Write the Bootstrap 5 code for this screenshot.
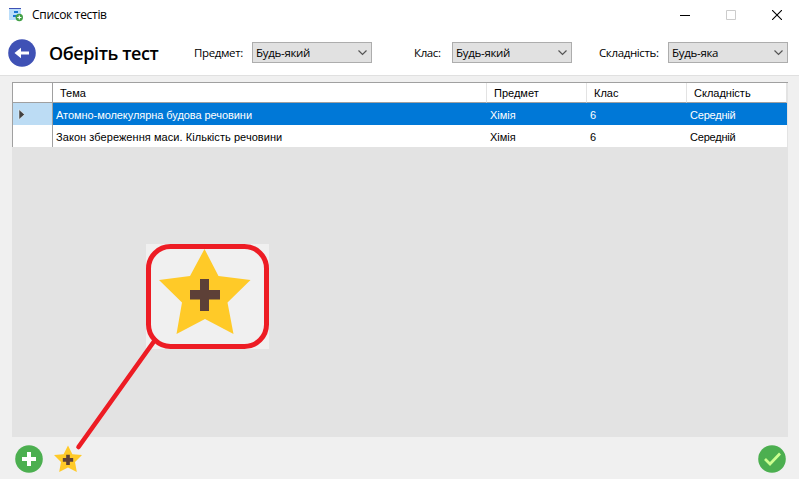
<!DOCTYPE html>
<html lang="uk">
<head>
<meta charset="utf-8">
<meta name="viewport" content="width=device-width, initial-scale=1">
<title>Список тестів</title>
<link href="https://cdn.jsdelivr.net/npm/bootstrap@5.3.0/dist/css/bootstrap.min.css" rel="stylesheet">
<style>
body{width:799px;height:479px;overflow:hidden;background:#f0f0f0;color:#000;font:12px/16px "Open Sans","Noto Sans",sans-serif}
svg{display:block;flex:none}
.titlebar{height:30px;padding-left:9px}
.win-title{font-size:12px;letter-spacing:-.3px;margin-left:9px}
.win-btns{margin-right:-1px}
.win-btn{width:46px;height:29px;border:0;background:none;padding:0;display:flex;align-items:center;justify-content:center}
.toolbar{height:46px;border-bottom:1px solid #e0e0e0;padding:0 11px 0 8px}
.page-title{font-size:18px;line-height:28px;font-weight:600;letter-spacing:-.4px;margin:0 0 0 13px;width:145px;white-space:nowrap}
.filter-label{font-size:11.5px;letter-spacing:-.37px;white-space:nowrap}
.combo{width:120px;height:21px;border:1px solid #adadad;background:#e1e1e1;font-size:11.5px;letter-spacing:-.3px;padding:1px 4px 0 3px;color:#000}
.grid-view{margin:6px 11px 0 12px;height:355px;background:#e3e3e3;border-top:1px solid #a0a0a0}
.tests{width:775px;table-layout:fixed;border-collapse:separate;border-spacing:0;font:11px/14px "Liberation Sans",Arial,sans-serif;background:#fff}
.tests th,.tests td{padding:0 0 0 3px;font-weight:400;white-space:nowrap}
.tests thead th{height:20px;padding-left:7px;border-bottom:1px solid #a0a0a0;border-right:1px solid #e3e3e3}
.tests tbody td,.tests tbody th{height:22px;padding-top:1px}
.tests tr>:first-child{border-right:1px solid #a0a0a0!important;border-left:1px solid #a0a0a0;padding-left:5px}
.tests .current>*{background:#0078d7;color:#fff}
.tests .current>:first-child{background:#bcdcf4;background-clip:padding-box}
.tests .current td:nth-child(2){letter-spacing:-.06px}
.tests tr:last-child td:nth-child(2){letter-spacing:.06px}
.tests .current td:nth-child(5),.tests tr td:nth-child(5){letter-spacing:-.2px}
.bottom{height:42px;padding:2px 13px 0 15px}
.callout-mark{position:absolute;left:0;top:0;pointer-events:none}
</style>
</head>
<body>
<header class="bg-white">
  <div class="titlebar d-flex align-items-center">
    <svg width="14" height="14" viewBox="0 0 14 14"><path fill="#bbdefb" d="M0 0h12v12H0z"/><path fill="#3f51b5" d="M0 0h12v1H0z"/><path fill="#1976d2" d="M5 3h4v2H5zM4 7h5v2H4z"/><circle cx="10.300" cy="9.500" r="3.700" fill="#43a047"/><path stroke="#fff" stroke-width="1.200" d="M8.200 9.500h4.200M10.300 7.400v4.200"/></svg>
    <span class="win-title">Список тестів</span>
    <div class="win-btns d-flex ms-auto">
      <button class="win-btn" aria-label="Згорнути"><svg width="10" height="10"><path fill="#000" d="M0 5h10v1H0z"/></svg></button>
      <button class="win-btn" aria-label="Розгорнути" disabled><svg width="10" height="10"><path fill="none" stroke="#ccc" d="M.5.5h9v9h-9z"/></svg></button>
      <button class="win-btn" aria-label="Закрити"><svg width="10" height="10"><path stroke="#000" stroke-width="1.100" d="M0 0l10 10M10 0L0 10"/></svg></button>
    </div>
  </div>
  <div class="toolbar d-flex align-items-center">
    <svg width="28" height="28" viewBox="0 0 28 28"><circle cx="14" cy="14" r="13.800" fill="#3f51b5"/><path fill="#fff" d="M6.500 14l6.500-5.200v3.700h8v3h-8v3.700z"/></svg>
    <h1 class="page-title">Оберіть тест</h1>
    <label class="filter-label" style="width:58px">Предмет:</label>
    <div class="combo d-flex align-items-center justify-content-between">Будь-який<svg width="9" height="6"><path fill="none" stroke="#555" stroke-width="1.200" d="M.5.5l4 4 4-4"/></svg></div>
    <label class="filter-label" style="width:38px;margin-left:42px">Клас:</label>
    <div class="combo d-flex align-items-center justify-content-between">Будь-який<svg width="9" height="6"><path fill="none" stroke="#555" stroke-width="1.200" d="M.5.5l4 4 4-4"/></svg></div>
    <label class="filter-label" style="width:69px;margin-left:27px">Складність:</label>
    <div class="combo d-flex align-items-center justify-content-between">Будь-яка<svg width="9" height="6"><path fill="none" stroke="#555" stroke-width="1.200" d="M.5.5l4 4 4-4"/></svg></div>
  </div>
</header>
<main class="grid-view">
  <table class="tests">
    <colgroup><col style="width:41px"><col style="width:434px"><col style="width:100px"><col style="width:100px"><col style="width:100px"></colgroup>
    <thead><tr><th></th><th>Тема</th><th>Предмет</th><th>Клас</th><th>Складність</th></tr></thead>
    <tbody>
      <tr class="current"><th><svg width="7" height="11"><path fill="#404040" stroke="#fff" stroke-width=".5" d="M1 .5l5.500 5-5.500 5z"/></svg></th><td>Атомно-молекулярна будова речовини</td><td>Хімія</td><td>6</td><td>Середній</td></tr>
      <tr><th></th><td>Закон збереження маси. Кількість речовини</td><td>Хімія</td><td>6</td><td>Середній</td></tr>
    </tbody>
  </table>
</main>
<footer class="bottom d-flex align-items-center">
  <svg width="28" height="28" viewBox="0 0 28 28"><circle cx="14" cy="14" r="13.800" fill="#4caf50"/><path fill="#fff" d="M12 7h4v5h5v4h-5v5h-4v-5H7v-4h5z"/></svg>
  <svg width="28" height="28" viewBox="0 0 92 88" style="margin-left:11px"><path fill="#ffca28" d="M46 0l14.500 28L92 31 69 54l6 33-29-15-29 15 6-33L0 31l31.500-3z"/><path fill="#5d4037" d="M40 30h12v11h11v12H52v11H40V53H29V41h11z"/></svg>
  <svg class="ms-auto" width="28" height="28" viewBox="0 0 28 28"><circle cx="14" cy="14" r="13.800" fill="#4caf50"/><path fill="none" stroke="#ccff90" stroke-width="2.700" d="M7 14l5 5L22 8.500"/></svg>
</footer>
<svg class="callout-mark" width="799" height="479" viewBox="0 0 799 479">
  <path fill="#f0f0f0" d="M146 244h123v105H146z"/>
  <path fill="#ffca28" d="M204.500 249l14 27 32 4-23 22.500 6 31.500-28.500-15-28.500 15 5.500-31.500-23-22.500 31-4z"/>
  <path fill="#5d4037" d="M200 279h9v11h11v9.500h-11V311h-9v-11.500h-10V290h10z"/>
  <rect x="148.500" y="246.500" width="118" height="100" rx="22" fill="none" stroke="#ed1c24" stroke-width="5"/>
  <path stroke="#ed1c24" stroke-width="4.600" stroke-linecap="round" d="M155 340L78.500 447"/>
</svg>
<script src="https://cdn.jsdelivr.net/npm/bootstrap@5.3.0/dist/js/bootstrap.bundle.min.js"></script>
</body>
</html>
